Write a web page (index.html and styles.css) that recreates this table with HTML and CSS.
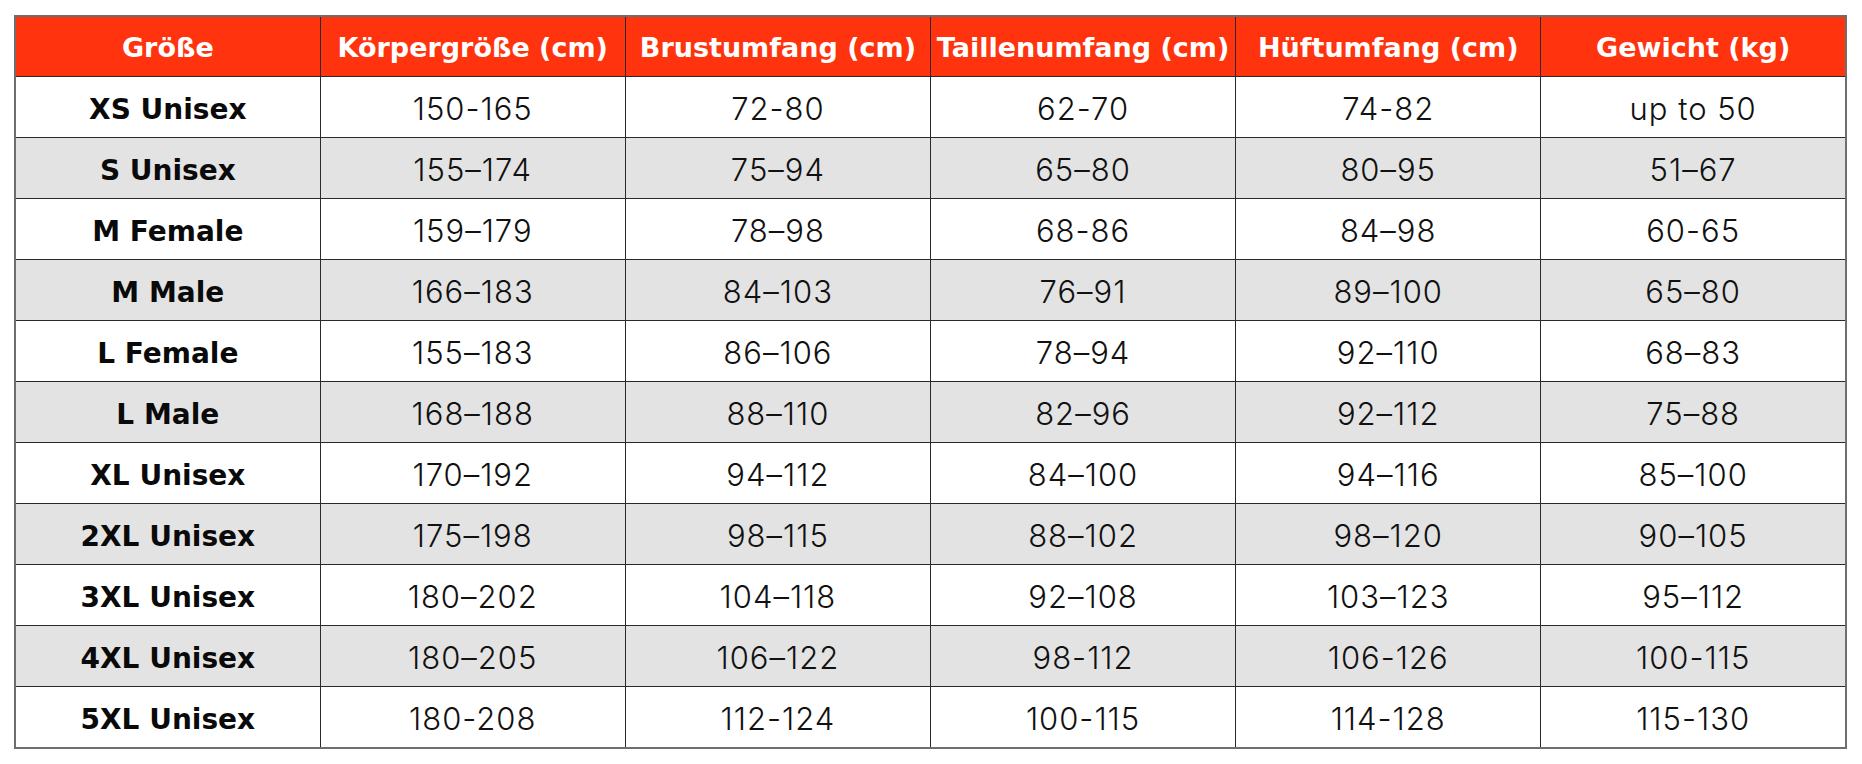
FILE: index.html
```html
<!DOCTYPE html>
<html lang="de">
<head>
<meta charset="utf-8">
<title>Größentabelle</title>
<link rel="stylesheet" href="styles.css">
</head>
<body>
<div class="wrap">
<table class="sizes">
<thead>
<tr><th>Größe</th><th>Körpergröße (cm)</th><th>Brustumfang (cm)</th><th>Taillenumfang (cm)</th><th>Hüftumfang (cm)</th><th>Gewicht (kg)</th></tr>
</thead>
<tbody>
<tr><td class="lbl">XS Unisex</td><td>150-165</td><td>72-80</td><td>62-70</td><td>74-82</td><td>up to 50</td></tr>
<tr class="alt"><td class="lbl">S Unisex</td><td>155–174</td><td>75–94</td><td>65–80</td><td>80–95</td><td>51–67</td></tr>
<tr><td class="lbl">M Female</td><td>159–179</td><td>78–98</td><td>68-86</td><td>84–98</td><td>60-65</td></tr>
<tr class="alt"><td class="lbl">M Male</td><td>166–183</td><td>84–103</td><td>76–91</td><td>89–100</td><td>65–80</td></tr>
<tr><td class="lbl">L Female</td><td>155–183</td><td>86–106</td><td>78–94</td><td>92–110</td><td>68–83</td></tr>
<tr class="alt"><td class="lbl">L Male</td><td>168–188</td><td>88–110</td><td>82–96</td><td>92–112</td><td>75–88</td></tr>
<tr><td class="lbl">XL Unisex</td><td>170–192</td><td>94–112</td><td>84–100</td><td>94–116</td><td>85–100</td></tr>
<tr class="alt"><td class="lbl">2XL Unisex</td><td>175–198</td><td>98–115</td><td>88–102</td><td>98–120</td><td>90–105</td></tr>
<tr><td class="lbl">3XL Unisex</td><td>180–202</td><td>104–118</td><td>92–108</td><td>103–123</td><td>95–112</td></tr>
<tr class="alt"><td class="lbl">4XL Unisex</td><td>180–205</td><td>106–122</td><td>98-112</td><td>106-126</td><td>100-115</td></tr>
<tr><td class="lbl">5XL Unisex</td><td>180-208</td><td>112-124</td><td>100-115</td><td>114-128</td><td>115-130</td></tr>
</tbody>
</table>
</div>
</body>
</html>
```
FILE: styles.css
```css
html, body {
  margin: 0;
  padding: 0;
  background: #ffffff;
}
.wrap {
  padding: 15px 15px 0 14px;
}
.sizes {
  width: 1833px;
  border-collapse: collapse;
  table-layout: fixed;
  border: 2px solid #6e6e6e;
}
.sizes th,
.sizes td {
  height: 58px;
  padding: 2px 0 0 0;
  text-align: center;
  vertical-align: middle;
  border: 1px solid #2a2a2a;
  line-height: 1;
}
.sizes th {
  background: #ff340e;
  color: #ffffff;
  font-family: "DejaVu Sans", sans-serif;
  font-weight: 700;
  font-size: 27px;
  height: 57px;
}
.sizes td {
  font-family: "Inter", "DejaVu Sans", sans-serif;
  font-weight: 350;
  font-size: 31px;
  letter-spacing: 1px;
  color: #111111;
}
.sizes td.lbl {
  font-family: "DejaVu Sans", sans-serif;
  font-weight: 700;
  font-size: 28px;
  letter-spacing: 0;
  color: #0a0a0a;
  padding-top: 5px;
  height: 55px;
}
.sizes tr.alt td {
  background: #e3e3e3;
}
```
